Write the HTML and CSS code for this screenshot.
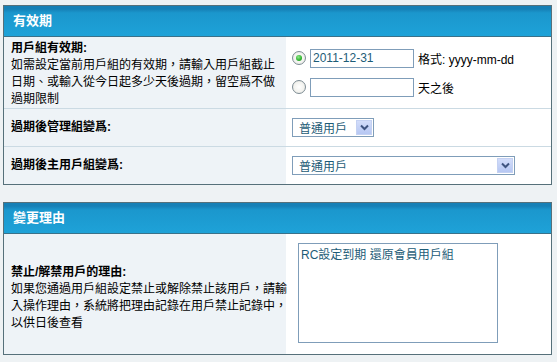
FILE: index.html
```html
<!DOCTYPE html>
<html lang="zh-Hant">

<head>
    <meta charset="UTF-8">
    <title>用戶組有效期</title>
    <link rel="stylesheet" href="styles.css">
</head>

<body>
    <!-- 有效期 -->
    <div class="panel">
        <div class="panel-head">有效期</div>
        <div class="row row-expiry">
            <div class="label">
                <div class="label-text">
                    <b>用戶組有效期:</b><br>
                    如需設定當前用戶組的有效期，請輸入用戶組截止<br>日期、或輸入從今日起多少天後過期，留空爲不做<br>過期限制
                </div>
            </div>
            <div class="field field-expiry">
                <div class="option">
                    <input type="radio" name="expiry" class="radio" checked>
                    <input type="text" class="text" value="2011-12-31">
                    <span class="hint">格式: yyyy-mm-dd</span>
                </div>
                <div class="option">
                    <input type="radio" name="expiry" class="radio">
                    <input type="text" class="text" value="">
                    <span class="hint">天之後</span>
                </div>
            </div>
        </div>
        <div class="row">
            <div class="label"><b>過期後管理組變爲:</b></div>
            <div class="field">
                <div class="select select-short">
                    <span class="select-text">普通用戶</span>
                    <span class="select-btn">
                        <svg width="9" height="7" viewBox="0 0 9 7"><path d="M1 1.5 L4.5 5 L8 1.5" fill="none" stroke="#3f5480" stroke-width="2"/></svg>
                    </span>
                </div>
            </div>
        </div>
        <div class="row">
            <div class="label"><b>過期後主用戶組變爲:</b></div>
            <div class="field">
                <div class="select select-long">
                    <span class="select-text">普通用戶</span>
                    <span class="select-btn">
                        <svg width="9" height="7" viewBox="0 0 9 7"><path d="M1 1.5 L4.5 5 L8 1.5" fill="none" stroke="#3f5480" stroke-width="2"/></svg>
                    </span>
                </div>
            </div>
        </div>
    </div>

    <!-- 變更理由 -->
    <div class="panel">
        <div class="panel-head">變更理由</div>
        <div class="row row-reason">
            <div class="label label-reason">
                <div class="label-text">
                    <b>禁止/解禁用戶的理由:</b><br>
                    如果您通過用戶組設定禁止或解除禁止該用戶，請輸<br>入操作理由，系統將把理由記錄在用戶禁止記錄中，<br>以供日後查看
                </div>
            </div>
            <div class="field field-reason">
                <textarea class="reason">RC設定到期 還原會員用戶組</textarea>
            </div>
        </div>
    </div>
</body>

</html>
```

FILE: styles.css
```css
body {
    margin: 0;
    padding: 5px 0 0 3px;
    background: #eef2f4;
    font: 12px "Liberation Sans", "Noto Sans CJK TC", sans-serif;
    color: #000;
}

.panel {
    width: 547px;
    border: 1px solid #56707a;
    background: #fff;
}

.panel + .panel {
    margin-top: 17px;
}

.panel-head {
    height: 30px;
    line-height: 30px;
    padding-left: 9px;
    color: #fff;
    font-size: 13px;
    font-weight: bold;
    background: linear-gradient(#1680b6 0, #1680b6 3px, #1b97cd 7px, #1ea2d8 100%);
    border-bottom: 1px solid #3a7189;
}

.row {
    display: grid;
    grid-template-columns: 282px 1fr;
    min-height: 37px;
}

.row + .row {
    border-top: 1px solid #cbdae3;
}

.label {
    background: #eef3f7;
    padding: 0 0 0 7px;
    line-height: 17px;
    display: flex;
    align-items: center;
    white-space: nowrap;
}

.row-expiry {
    height: 71px;
}

.row-expiry .label {
    align-items: flex-start;
    padding-top: 3px;
}

.field {
    display: flex;
    align-items: center;
    padding-left: 5px;
}

.field-expiry {
    flex-direction: column;
    align-items: flex-start;
    justify-content: center;
    gap: 10px;
    padding-left: 6px;
}

.option {
    display: flex;
    align-items: center;
    height: 19px;
    white-space: nowrap;
}

.radio {
    appearance: none;
    -webkit-appearance: none;
    flex-shrink: 0;
    margin: 0 4px 0 0;
    width: 14px;
    height: 14px;
    border: 1px solid #7d8c94;
    border-radius: 50%;
    background: radial-gradient(circle at 50% 50%, #ffffff 0, #f2f2ee 60%, #d8d8d2 100%);
    position: relative;
}

.radio:checked::after {
    content: "";
    position: absolute;
    left: 3px;
    top: 3px;
    width: 6px;
    height: 6px;
    border-radius: 50%;
    background: radial-gradient(circle at 40% 35%, #8fe88a 0, #2fb22f 60%, #1c8a1c 100%);
}

.text {
    flex-shrink: 0;
    width: 98px;
    height: 17px;
    box-sizing: content-box;
    padding: 0 2px;
    margin: 0;
    border: 1px solid #7f9db9;
    font: 12px "Liberation Sans", "Noto Sans CJK TC", sans-serif;
    color: #1d5c77;
    background: #fff;
    outline: none;
}

.hint {
    margin-left: 4px;
}

.select {
    display: flex;
    align-items: center;
    justify-content: space-between;
    height: 17px;
    border: 1px solid #7f9db9;
    background: #fff;
    color: #1d5c77;
    margin-left: 1px;
}

.select-short {
    width: 80px;
}

.select-long {
    width: 221px;
}

.select-text {
    padding-left: 6px;
}

.select-btn {
    width: 16px;
    height: 15px;
    margin-right: 1px;
    display: flex;
    align-items: center;
    justify-content: center;
    background: linear-gradient(#d3ddfa, #b6c7f3);
    border: 1px solid #c4d1f2;
    box-sizing: border-box;
}

.row-reason {
    height: 120px;
}

.label-reason {
    padding-top: 8px;
}

.field-reason {
    align-items: flex-start;
    padding: 9px 0 0 12px;
}

.reason {
    width: 194px;
    height: 96px;
    margin: 0;
    padding: 1px 2px;
    border: 1px solid #7f9db9;
    font: 12px "Liberation Sans", "Noto Sans CJK TC", sans-serif;
    color: #1d5c77;
    resize: none;
    outline: none;
}
```
